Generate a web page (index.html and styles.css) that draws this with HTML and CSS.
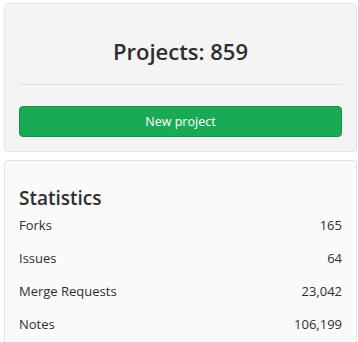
FILE: index.html
```html
<!DOCTYPE html>
<html lang="en">
<head>
    <meta charset="UTF-8">
    <title>Projects</title>
    <link rel="stylesheet" href="styles.css">
</head>
<body>
    <div class="card">
        <h2 class="count">Projects: 859</h2>
        <hr>
        <button class="btn-new">New project</button>
    </div>

    <div class="card stats">
        <h3>Statistics</h3>
        <div class="row"><span>Forks</span><span>165</span></div>
        <div class="row"><span>Issues</span><span>64</span></div>
        <div class="row"><span>Merge Requests</span><span>23,042</span></div>
        <div class="row"><span>Notes</span><span>106,199</span></div>
    </div>
</body>
</html>
```

FILE: styles.css
```css
body {
    font-family: "Open Sans", "Noto Sans", sans-serif;
    margin: 0;
    padding: 3px 1px 0 4px;
    color: #2e2e2e;
    background: #fff;
}
.card {
    background: #f4f4f4;
    border: 1px solid #e5e5e5;
    border-radius: 4px;
    padding: 14px;
    margin-bottom: 8px;
}
.count {
    font-size: 22px;
    font-weight: 600;
    text-align: center;
    margin: 18px 0 0;
    line-height: 30px;
}
hr {
    border: none;
    border-top: 1px solid #e0e0e0;
    margin: 18px 0 21px;
}
.btn-new {
    display: block;
    width: 100%;
    height: 31px;
    background: #1aaa55;
    color: #fff;
    border: 1px solid #168f48;
    border-radius: 4px;
    font-family: inherit;
    font-size: 12.5px;
    cursor: pointer;
}
.stats {
    background: #fafafa;
    padding-top: 26px;
}
.stats h3 {
    font-size: 19px;
    font-weight: 600;
    margin: 0;
    line-height: 22px;
}
.row {
    display: flex;
    justify-content: space-between;
    font-size: 13px;
    line-height: 33px;
}
```
